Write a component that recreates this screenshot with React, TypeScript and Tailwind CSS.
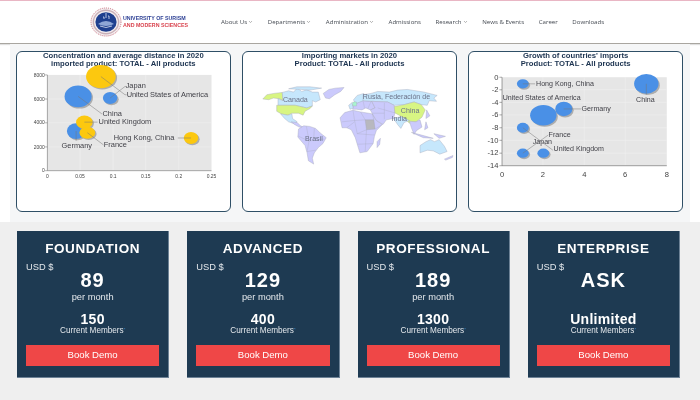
import React from "react";

const navItems = [
  { label: "About Us", caret: true },
  { label: "Departments", caret: true },
  { label: "Administration", caret: true },
  { label: "Admissions", caret: false },
  { label: "Research", caret: true },
  { label: "News & Events", caret: false },
  { label: "Career", caret: false },
  { label: "Downloads", caret: false },
];

const plans = [
  { name: "FOUNDATION", price: "89", period: "per month", members: "150" },
  { name: "ADVANCED", price: "129", period: "per month", members: "400" },
  { name: "PROFESSIONAL", price: "189", period: "per month", members: "1300" },
  { name: "ENTERPRISE", price: "ASK", period: "", members: "Unlimited" },
];

const BLUE = "#4a90e6";
const YELLOW = "#fcc80f";

type Bubble = { x: number; y: number; rx: number; ry: number; color: string };

const Bubbles = ({ items }: { items: Bubble[] }) => (
  <>
    {items.map((b, i) => (
      <g key={i}>
        <ellipse cx={b.x + 4} cy={b.y + 4} rx={b.rx} ry={b.ry} fill="#9a9a9a" opacity="0.75" />
        <ellipse cx={b.x} cy={b.y} rx={b.rx} ry={b.ry} fill={b.color} />
      </g>
    ))}
  </>
);

const Logo = () => (
  <svg width="32" height="30" viewBox="0 0 32 30" className="shrink-0">
    <ellipse cx="16" cy="15" rx="15" ry="14" fill="#f4eef0" stroke="#c9707e" strokeWidth="1" strokeDasharray="1 1" />
    <ellipse cx="16" cy="15" rx="12.6" ry="11.8" fill="none" stroke="#c9b0b8" strokeWidth="1.4" />
    <ellipse cx="16" cy="15" rx="10.6" ry="9.8" fill="#1f3f8f" />
    <path d="M8 17 Q16 11 24 17 Q16 21 8 17Z" fill="#8fa6d6" />
    <path d="M16 6v5M13 10h1v2M18 9h1v3" stroke="#dfe6f5" strokeWidth="0.8" fill="none" />
    <path d="M10 19 Q16 22 22 19" stroke="#dfe6f5" strokeWidth="0.8" fill="none" />
  </svg>
);

const ConcentrationChart = () => {
  const gridX = [209, 309, 408, 508];
  const gridY = [163, 235, 308];
  const label = "#3f3f46";
  return (
    <svg viewBox="18 66 644 436" className="w-full overflow-visible">
      <rect x="110" y="90" width="497" height="290" fill="#e6e6e6" />
      {gridX.map((x) => (
        <line key={x} x1={x} x2={x} y1="90" y2="380" stroke="#f2f2f2" strokeWidth="1.5" />
      ))}
      {gridY.map((y) => (
        <line key={y} x1="110" x2="607" y1={y} y2={y} stroke="#f2f2f2" strokeWidth="1.5" />
      ))}
      <line x1="110" x2="110" y1="90" y2="380" stroke="#555" strokeWidth="1.5" />
      <line x1="110" x2="607" y1="380" y2="380" stroke="#555" strokeWidth="1.5" />
      <g fontSize="15" fill="#444" fontFamily="'Liberation Sans', sans-serif">
        {[["8000", 90], ["6000", 163], ["4000", 235], ["2000", 308], ["0", 380]].map(([t, y]) => (
          <g key={t}>
            <text x="102" y={Number(y) + 5} textAnchor="end">{t}</text>
            <line x1="103" x2="110" y1={y} y2={y} stroke="#666" strokeWidth="1.5" />
          </g>
        ))}
        {[["0", 110], ["0.05", 209], ["0.1", 309], ["0.15", 408], ["0.2", 508], ["0.25", 607]].map(([t, x]) => (
          <text key={t} x={x} y="402" textAnchor="middle">{t}</text>
        ))}
      </g>
      <Bubbles
        items={[
          { x: 203, y: 155, rx: 41, ry: 33, color: BLUE },
          { x: 300, y: 160, rx: 22, ry: 18, color: BLUE },
          { x: 197, y: 260, rx: 28, ry: 24, color: BLUE },
          { x: 272, y: 95, rx: 45, ry: 35, color: YELLOW },
          { x: 222, y: 233, rx: 25, ry: 20, color: YELLOW },
          { x: 231, y: 265, rx: 24, ry: 18, color: YELLOW },
          { x: 545, y: 281, rx: 22, ry: 18, color: YELLOW },
        ]}
      />
      <g stroke="#777" strokeWidth="1.5" fill="none">
        <path d="M272 95 L345 150 H350" />
        <path d="M300 160 L345 125 H350" />
        <path d="M203 155 L275 208" />
        <path d="M222 233 H262" />
        <path d="M197 260 V290" />
        <path d="M231 265 L280 302" />
        <path d="M505 281 H545" />
      </g>
      <g fontSize="22.5" fill={label} fontFamily="'Liberation Sans', sans-serif">
        <text x="347" y="131">Japan</text>
        <text x="350" y="156">United States of America</text>
        <text x="277" y="215">China</text>
        <text x="265" y="240">United Kingdom</text>
        <text x="311" y="287">Hong Kong, China</text>
        <text x="153" y="311">Germany</text>
        <text x="281" y="309">France</text>
      </g>
    </svg>
  );
};

const GrowthChart = () => {
  const label = "#3f3f46";
  return (
    <svg viewBox="18 66 644 436" className="w-full overflow-visible">
      <rect x="118" y="97" width="499" height="268" fill="#e6e6e6" />
      {[242, 367, 491].map((x) => (
        <line key={x} x1={x} x2={x} y1="97" y2="365" stroke="#f2f2f2" strokeWidth="1.5" />
      ))}
      {[135, 173, 211, 250, 288, 327].map((y) => (
        <line key={y} x1="118" x2="617" y1={y} y2={y} stroke="#f2f2f2" strokeWidth="1.5" />
      ))}
      <line x1="118" x2="118" y1="97" y2="365" stroke="#444" strokeWidth="1.5" />
      <line x1="118" x2="617" y1="365" y2="365" stroke="#444" strokeWidth="1.5" />
      <g fontSize="23" fill="#444" fontFamily="'Liberation Sans', sans-serif">
        {[["0", 97], ["-2", 135], ["-4", 173], ["-6", 211], ["-8", 250], ["-10", 288], ["-12", 327], ["-14", 365]].map(([t, y]) => (
          <g key={t}>
            <text x="107" y={Number(y) + 7} textAnchor="end">{t}</text>
            <line x1="110" x2="118" y1={y} y2={y} stroke="#555" strokeWidth="1.5" />
          </g>
        ))}
        {[["0", 118], ["2", 242], ["4", 367], ["6", 491], ["8", 617]].map(([t, x]) => (
          <text key={t} x={x} y="398" textAnchor="middle">{t}</text>
        ))}
      </g>
      <Bubbles
        items={[
          { x: 555, y: 117, rx: 37, ry: 30, color: BLUE },
          { x: 181, y: 117, rx: 18, ry: 14, color: BLUE },
          { x: 243, y: 212, rx: 40, ry: 31, color: BLUE },
          { x: 305, y: 193, rx: 26, ry: 22, color: BLUE },
          { x: 181, y: 250, rx: 18, ry: 15, color: BLUE },
          { x: 181, y: 327, rx: 18, ry: 14, color: BLUE },
          { x: 243, y: 327, rx: 18, ry: 14, color: BLUE },
        ]}
      />
      <g stroke="#777" strokeWidth="1.5" fill="none">
        <path d="M181 117 H218" />
        <path d="M305 193 H357" />
        <path d="M555 117 V150" />
        <path d="M181 250 L272 318" />
        <path d="M181 327 L258 272" />
      </g>
      <g fontSize="21.5" fill={label} fontFamily="'Liberation Sans', sans-serif">
        <text x="221" y="124">Hong Kong, China</text>
        <text x="120" y="167">United States of America</text>
        <text x="359" y="200">Germany</text>
        <text x="524" y="172">China</text>
        <text x="259" y="278">France</text>
        <text x="211" y="300">Japan</text>
        <text x="274" y="321">United Kingdom</text>
      </g>
    </svg>
  );
};

const WorldMap = () => {
  const LAV = "#cbcafc";
  const SKY = "#c6e7fc";
  const LIME = "#d8f583";
  return (
    <svg viewBox="12 66 644 436" className="w-full overflow-visible">
      <g stroke="#a3a6b8" strokeWidth="1.2" strokeLinejoin="round">
        {/* north america */}
        <polygon fill={LIME} points="72,163 84,150 105,146 131,143 133,168 122,162 104,160 90,165" />
        <polygon fill={SKY} points="131,143 150,138 165,142 176,130 190,140 205,135 222,142 240,142 246,165 232,172 222,168 222,184 205,190 170,182 118,182 118,162 133,168" />
        <polygon fill={SKY} points="150,132 175,126 215,126 250,130 215,136 190,134" />
        <polygon fill={LAV} points="255,146 272,134 292,130 318,128 308,140 290,150 274,162 262,160" />
        <polygon fill={LIME} points="114,182 170,182 205,190 222,184 215,192 200,200 194,212 180,206 160,206 148,212 128,208 114,200" />
        <polygon fill={SKY} points="126,208 148,212 160,208 162,222 176,232 168,238 150,232 138,222" />
        <polygon fill={LAV} points="158,232 176,234 186,244 198,250 182,248 168,240" />
        {/* south america */}
        <polygon fill={LAV} points="180,254 196,244 214,246 232,252 246,266 264,280 254,298 240,310 228,326 222,342 226,360 210,350 206,326 200,304 178,278" />
        {/* africa */}
        <polygon fill={LAV} points="306,220 320,204 345,197 368,202 392,206 404,208 416,228 434,240 416,258 410,276 406,298 388,322 366,326 358,300 352,280 340,256 326,250 312,250" />
        <polygon fill="#b8b8bf" points="382,226 408,226 412,254 386,256" />
        <polygon fill={LAV} points="418,292 428,282 426,300 418,310" />
        {/* europe */}
        <polygon fill={LAV} points="345,180 352,168 376,168 402,170 412,190 398,196 384,190 372,196 356,194 344,194" />
        <polygon fill={SKY} points="346,166 358,152 378,146 376,168 356,176" />
        <polygon fill={SKY} points="332,182 342,174 346,190 336,194" />
        {/* russia */}
        <polygon fill={SKY} points="376,150 400,146 420,140 455,142 480,136 510,134 560,142 600,152 590,160 598,170 576,168 570,182 552,180 530,172 500,180 470,182 450,172 402,170 376,168" />
        {/* middle east */}
        <polygon fill={LAV} points="402,170 450,172 470,182 472,205 468,222 446,226 436,240 416,228 404,208 398,196 412,190" />
        {/* china */}
        <polygon fill={LIME} points="470,186 500,180 530,172 552,180 564,196 554,218 536,232 516,236 496,218 472,205" />
        <polygon fill={SKY} points="468,222 490,216 516,228 500,234 490,252 480,240" />
        {/* se asia */}
        <polygon fill={LAV} points="516,230 536,232 548,226 554,248 538,258 530,270 522,250" />
        <polygon fill={LAV} points="522,264 552,272 588,282 558,280" />
        <polygon fill={LAV} points="590,268 625,276 606,282" />
        <polygon fill={LAV} points="566,232 572,250 562,256" />
        <polygon fill={LAV} points="568,196 578,214 566,222" />
        {/* australia */}
        <polygon fill={SKY} points="548,304 566,292 580,286 592,292 606,286 622,306 630,322 608,330 588,320 570,318 548,326" />
        <polygon fill={LAV} points="622,345 648,334 646,340 626,348" />
      </g>
      <g stroke="#a3a6b8" strokeWidth="0.9" fill="none">
        <path d="M345 197 L350 228 L312 232 M350 228 L382 226 M368 202 L382 226 M350 228 L358 268 L410 272 M386 256 L382 322 M358 268 L386 256 M326 250 L350 232 M358 300 L406 298 M404 208 L408 226 M412 254 L434 240" />
        <path d="M204 246 L212 290 L258 284 M212 290 L206 322 L232 318 M180 276 L212 290 M228 252 L226 286" />
        <path d="M376 170 L380 190 M400 170 L390 192 M440 175 L440 224 M420 190 L472 205 M404 206 L440 206" />
      </g>
      <polygon points="344,172 356,172 356,184 344,184" fill="#a9f4cf" stroke="#a3a6b8" strokeWidth="1" />
      <g fontSize="21.5" fontFamily="'Liberation Sans', sans-serif" fill="#6b7288">
        <text x="133" y="171">Canada</text>
        <text x="375" y="164">Rusia, Federación de</text>
        <text x="490" y="206">China</text>
        <text x="462" y="231">India</text>
        <text x="200" y="289">Brasil</text>
      </g>
    </svg>
  );
};

const ChartCard = ({ title, sub, children }: { title: string; sub: string; children: React.ReactNode }) => (
  <div className="flex h-[161px] flex-1 flex-col rounded-[6px] border border-[#2f4f66] bg-white">
    <div className="flex h-[15px] flex-col items-center justify-end text-center text-[7.7px] font-bold leading-[7.5px] text-[#1c3350]">
      <div className="whitespace-nowrap">{title}</div>
      <div className="whitespace-nowrap">{sub}</div>
    </div>
    {children}
  </div>
);

const PlanCard = ({ name, price, period, members }: (typeof plans)[number]) => (
  <div className="flex h-[147px] flex-1 flex-col items-center border-r border-b border-[#6d8296] bg-[#1e3a52] px-[9px] pt-[10px] text-white">
    <div className="h-[16px] whitespace-nowrap text-[13.5px] font-bold leading-[16px] tracking-[0.6px]">{name}</div>
    <div className="mt-[6px] h-[8px] w-full text-[9.3px] leading-[8px] text-[#e4e8ec]">USD $</div>
    <div className="h-[19px] text-[20px] font-bold leading-[19px] tracking-[1px]">{price}</div>
    <div className="mt-[1px] h-[12px] text-[9.3px] leading-[12px] text-[#e4e8ec]">{period}</div>
    <div className="mt-[10px] h-[12px] text-[14px] font-bold leading-[12px] tracking-[0.3px]">{members}</div>
    <div className="mt-[1px] h-[9px] whitespace-nowrap text-[8.2px] leading-[9px] text-[#e4e8ec]">
      Current Members<sup className="text-[4px] text-[#3b9be8]">*</sup>
    </div>
    <button className="mt-[10px] h-[21px] w-full bg-[#ef4747] text-[9.6px] text-white">Book Demo</button>
  </div>
);

export default function App() {
  return (
    <div className="flex h-[400px] w-[700px] flex-col overflow-hidden bg-white font-['Liberation_Sans',Arial,sans-serif] blur-[0.35px]">
      <header className="flex h-[44px] shrink-0 items-center border-t border-b border-t-[#e9b6c4] border-b-[#a9a6a0] bg-white pl-[90px] shadow-[0_1px_1px_rgba(0,0,0,0.12)]">
        <Logo />
        <div className="ml-[1px] text-[5.3px] font-bold leading-[7px]">
          <div className="text-[#2c3f94]">UNIVERSITY OF SURISM</div>
          <div className="text-[#d9434e]">AND MODERN SCIENCES</div>
        </div>
        <nav className="ml-[33px] flex items-center gap-[14.6px] font-['Open_Sans',sans-serif] text-[6.1px] text-[#454a52]">
          {navItems.map((item) => (
            <span key={item.label} className="flex items-center gap-[1px] whitespace-nowrap">
              {item.label}
              {item.caret && (
                <svg width="5" height="4" viewBox="0 0 5 4">
                  <path d="M1 1l1.5 1.6L4 1" fill="none" stroke="#888" strokeWidth="0.6" />
                </svg>
              )}
            </span>
          ))}
        </nav>
      </header>

      <section className="mx-[10px] flex h-[178px] shrink-0 gap-[11.5px] bg-[#f5f6f7] px-[6px] pt-[7px] pr-[7px]">
        <ChartCard title="Concentration and average distance in 2020" sub="imported product: TOTAL - All products">
          <ConcentrationChart />
        </ChartCard>
        <ChartCard title="Importing markets in 2020" sub="Product: TOTAL - All products">
          <WorldMap />
        </ChartCard>
        <ChartCard title="Growth of countries' imports" sub="Product: TOTAL - All products">
          <GrowthChart />
        </ChartCard>
      </section>

      <section className="flex flex-1 gap-[18px] bg-[#efefef] pt-[9px] pr-[20px] pl-[17px]">
        {plans.map((p) => (
          <PlanCard key={p.name} {...p} />
        ))}
      </section>
    </div>
  );
}
